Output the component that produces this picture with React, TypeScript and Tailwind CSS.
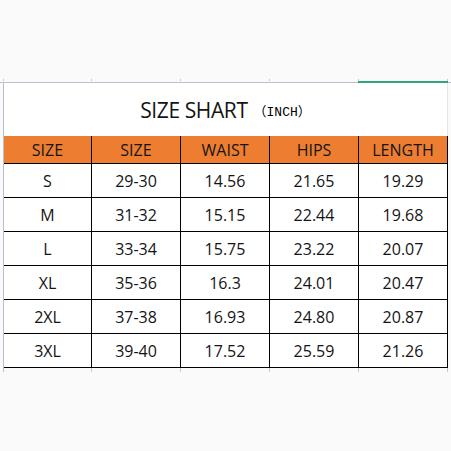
const headers = ["SIZE", "SIZE", "WAIST", "HIPS", "LENGTH"];

const rows = [
  ["S", "29-30", "14.56", "21.65", "19.29"],
  ["M", "31-32", "15.15", "22.44", "19.68"],
  ["L", "33-34", "15.75", "23.22", "20.07"],
  ["XL", "35-36", "16.3", "24.01", "20.47"],
  ["2XL", "37-38", "16.93", "24.80", "20.87"],
  ["3XL", "39-40", "17.52", "25.59", "21.26"],
];

const tickCols = ["w-[88px]", "w-[89px]", "w-[89px]", "w-[89px]", "w-[89px]"];

function App() {
  return (
    <div className="w-[451px] h-[451px] bg-[#fafafa] overflow-hidden font-['Open_Sans',sans-serif] text-[#141414]">
      {/* sheet column ticks above */}
      <div className="h-[79px]" />
      <div className="flex h-[2px] ml-[3px] border-l border-[#c4c9d4]">
        {tickCols.map((w, i) => (
          <div key={i} className={`${w} border-r border-[#c4c9d4]`} />
        ))}
      </div>

      {/* top sheet line with green selection bar */}
      <div className="relative h-[2px]">
        <div className="absolute left-0 right-0 bottom-0 h-px bg-[#b9bfcc]" />
        <div className="absolute left-[358px] w-[90px] top-0 h-[2px] bg-[#2fa57a]" />
      </div>

      <div className="ml-[3px] w-[445px] border-l border-[#b9bfcc]">
        {/* title */}
        <div className="h-[53px] bg-white border-r border-[#e3e6ec] flex items-center justify-center pt-[2px]">
          <span className="text-[21px] leading-none tracking-[-0.4px]">SIZE SHART</span>
          <span className="ml-[6px] text-[13px] leading-none mt-[4px] text-black font-['Liberation_Mono','Noto_Sans_CJK_SC',monospace]">
            （INCH）
          </span>
        </div>

        {/* table */}
        <div className="grid grid-cols-[88px_89px_89px_89px_89px]">
          {headers.map((h, i) => (
            <div
              key={i}
              className="h-[28px] bg-[#ed7d31] border-r border-b border-black flex items-center justify-center text-[16px] pt-[1px]"
            >
              {h}
            </div>
          ))}
          {rows.map((row, r) =>
            row.map((cell, c) => (
              <div
                key={`${r}-${c}`}
                className="h-[34px] bg-white border-r border-b border-black flex items-center justify-center text-[16px]"
              >
                {cell}
              </div>
            ))
          )}
        </div>

        <div className="flex h-[4px]">
          {tickCols.map((w, i) => (
            <div key={i} className={`${w} border-r border-[#c4c9d4]`} />
          ))}
        </div>
      </div>
    </div>
  );
}

export default App;
